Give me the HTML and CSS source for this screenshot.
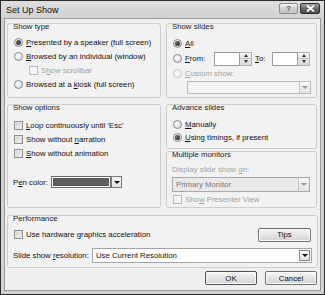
FILE: index.html
```html
<!DOCTYPE html>
<html lang="en">
<head>
  <meta charset="UTF-8" />
  <title>Set Up Show</title>
  <link rel="stylesheet" href="styles.css">
</head>
<body>
  <div class="window">
    <div class="titlebar">
      <span class="title">Set Up Show</span>
      <div class="caption">
        <span class="cap-btn help">?</span>
        <span class="cap-btn close">
          <svg width="9" height="7" viewBox="0 0 9 7"><path d="M1 0.5 L8 6.5 M8 0.5 L1 6.5" stroke="#fff" stroke-width="1.8"/></svg>
        </span>
      </div>
    </div>

    <div class="client">
      <div class="columns">
        <div class="column">
          <div class="group show-type">
            <div class="group-label">Show type</div>
            <div class="rows">
              <div class="opt"><span class="radio on"></span><span><u>P</u>resented by a speaker (full screen)</span></div>
              <div class="opt"><span class="radio"></span><span><u>B</u>rowsed by an individual (window)</span></div>
              <div class="opt indent disabled"><span class="check"></span><span>S<u>h</u>ow scrollbar</span></div>
              <div class="opt"><span class="radio"></span><span>Browsed at a <u>k</u>iosk (full screen)</span></div>
            </div>
          </div>

          <div class="group show-options">
            <div class="group-label">Show options</div>
            <div class="rows">
              <div class="opt"><span class="check"></span><span><u>L</u>oop continuously until 'Esc'</span></div>
              <div class="opt"><span class="check"></span><span>Show without <u>n</u>arration</span></div>
              <div class="opt"><span class="check"></span><span><u>S</u>how without animation</span></div>
            </div>
            <div class="pen-row">
              <span>P<u>e</u>n color:</span>
              <div class="color-pick">
                <span class="swatch"></span>
                <span class="combo-btn dark"></span>
              </div>
            </div>
          </div>
        </div>

        <div class="column">
          <div class="group show-slides">
            <div class="group-label">Show slides</div>
            <div class="opt first"><span class="radio on"></span><span><u>A</u>ll</span></div>
            <div class="opt from-row">
              <span class="radio"></span><span class="from-label"><u>F</u>rom:</span>
              <div class="spin"><span class="spin-field"></span><span class="spin-btns"><i class="up"></i><i class="down"></i></span></div>
              <span class="to-label"><u>T</u>o:</span>
              <div class="spin"><span class="spin-field"></span><span class="spin-btns"><i class="up"></i><i class="down"></i></span></div>
            </div>
            <div class="opt custom disabled"><span class="radio"></span><span><u>C</u>ustom show:</span></div>
            <div class="combo custom-combo disabled"><span class="combo-text"></span><span class="combo-btn"></span></div>
          </div>

          <div class="stack">
            <div class="group advance">
              <div class="group-label">Advance slides</div>
              <div class="opt first"><span class="radio"></span><span><u>M</u>anually</span></div>
              <div class="opt"><span class="radio on"></span><span><u>U</u>sing timings, if present</span></div>
            </div>

            <div class="group monitors">
              <div class="group-label">Multiple monitors</div>
              <div class="disabled display-label">Display slide show <u>o</u>n:</div>
              <div class="combo monitor-combo disabled"><span class="combo-text">Primary Monitor</span><span class="combo-btn"></span></div>
              <div class="opt disabled presenter"><span class="check"></span><span>Sho<u>w</u> Presenter View</span></div>
            </div>
          </div>
        </div>
      </div>

      <div class="group performance">
        <div class="group-label">Performance</div>
        <div class="perf-row">
          <div class="opt"><span class="check"></span><span>Use hardware graphics acceleration</span></div>
          <span class="btn tips">Tips</span>
        </div>
        <div class="perf-row res-row">
          <span>Slide show <u>r</u>esolution:</span>
          <div class="combo res-combo"><span class="combo-text">Use Current Resolution</span><span class="combo-btn dark"></span></div>
        </div>
      </div>

      <div class="actions">
        <span class="btn ok">OK</span>
        <span class="btn">Cancel</span>
      </div>
    </div>
  </div>
</body>
</html>
```

FILE: styles.css
```css
* {
  box-sizing: border-box;
  margin: 0;
  padding: 0;
}

body {
  background: #fff;
  font-family: "Liberation Sans", Arial, sans-serif;
  font-size: 7.8px;
  color: #111;
}

u {
  text-decoration: underline;
  text-underline-offset: 1px;
}

.window {
  width: 325px;
  height: 295px;
  border: 1px solid #2b2b2b;
  background: linear-gradient(#dedede, #cfcfcf 20px, #d2d2d2);
  padding: 0 3px 3px;
  display: flex;
  flex-direction: column;
}

/* title bar */
.titlebar {
  height: 17px;
  display: flex;
  align-items: center;
  justify-content: space-between;
  padding: 0 1px 0 2px;
}

.title {
  font-size: 9px;
  color: #111;
}

.caption {
  display: flex;
  gap: 2px;
  margin-top: -2px;
}

.cap-btn {
  height: 11px;
  border-radius: 2px;
  display: grid;
  place-items: center;
}

.help {
  width: 19px;
  border: 1px solid #8c8c8c;
  background: linear-gradient(#f4f4f4, #d0d0d0 50%, #c2c2c2);
  color: #555;
  font-size: 8px;
  font-weight: bold;
  line-height: 9px;
}

.close {
  width: 20px;
  border: 1px solid #2e2e2e;
  background: linear-gradient(#a2a2a2, #6a6a6a 50%, #4c4c4c);
}

/* client area */
.client {
  flex: 1;
  background: #efefef;
  border: 1px solid #9a9a9a;
  padding: 4px 2px 0;
  display: flex;
  flex-direction: column;
}

.columns {
  display: flex;
  gap: 5px;
}

.column {
  display: flex;
  flex-direction: column;
  gap: 6px;
}

.column:first-child {
  width: 154px;
}

.column:last-child {
  width: 151px;
}

.stack {
  display: flex;
  flex-direction: column;
  gap: 2px;
}

.group {
  border: 1px solid #cdcdcd;
  border-radius: 3px;
  background: #f2f2f2;
  padding: 0 5px;
}

.group-label {
  height: 8px;
  line-height: 8px;
  margin-top: -1px;
  color: #1a1a1a;
}

.opt {
  display: flex;
  align-items: center;
  gap: 3px;
  height: 14px;
  white-space: nowrap;
}

.disabled {
  color: #a2a2a2;
}

/* radio + checkbox */
.radio {
  width: 9px;
  height: 9px;
  flex: none;
  border-radius: 50%;
  border: 1px solid #8a8a8a;
  background: radial-gradient(circle at 40% 35%, #ffffff, #d2d2d2);
  display: grid;
  place-items: center;
  margin-left: 1px;
}

.radio.on::after {
  content: "";
  width: 5px;
  height: 5px;
  border-radius: 50%;
  background: radial-gradient(circle at 40% 35%, #6a6a6a, #1c1c1c);
}

.disabled .radio {
  border-color: #c4c4c4;
  background: #f4f4f4;
}

.check {
  width: 9px;
  height: 9px;
  flex: none;
  border: 1px solid #8e8e8e;
  background: linear-gradient(135deg, #cfcfcf, #f4f4f4);
  box-shadow: inset 0 0 0 1px #e6e6e6;
  margin-left: 1px;
}

.disabled .check {
  border-color: #bdbdbd;
  background: #f6f6f6;
  box-shadow: none;
}

/* show type */
.show-type {
  height: 75px;
}

.show-type .rows {
  margin-top: 4px;
}

.indent {
  padding-left: 15px;
}

/* show slides */
.show-slides {
  height: 75px;
}

.show-slides .first {
  margin-top: 5px;
}

.from-row {
  height: 17px;
  gap: 0;
}

.from-row .radio {
  margin-right: 3px;
}

.from-label {
  width: 29px;
}

.to-label {
  width: 20px;
  padding-left: 3px;
}

.spin {
  display: flex;
  height: 14px;
}

.spin-field {
  width: 26px;
  border: 1px solid #9c9c9c;
  background: #fff;
}

.spin-btns {
  width: 12px;
  display: flex;
  flex-direction: column;
  border: 1px solid #b4b4b4;
  border-left: none;
  background: linear-gradient(#f6f6f6, #dadada);
}

.spin-btns i {
  flex: 1;
  display: grid;
  place-items: center;
}

.spin-btns i + i {
  border-top: 1px solid #bdbdbd;
}

.spin-btns .up::after {
  content: "";
  border: 2.5px solid transparent;
  border-top: none;
  border-bottom: 3px solid #333;
}

.spin-btns .down::after {
  content: "";
  border: 2.5px solid transparent;
  border-bottom: none;
  border-top: 3px solid #333;
}

.custom {
  height: 12px;
}

.combo {
  display: flex;
  border: 1px solid #9c9c9c;
  background: #fff;
}

.combo-text {
  flex: 1;
  padding-left: 3px;
  display: flex;
  align-items: center;
}

.combo-btn {
  width: 11px;
  flex: none;
  display: grid;
  place-items: center;
  border-left: 1px solid #c6c6c6;
  background: linear-gradient(#f8f8f8, #e2e2e2);
}

.combo-btn::after {
  content: "";
  border: 3px solid transparent;
  border-bottom: none;
  border-top: 3px solid #9a9a9a;
}

.combo-btn.dark {
  border: 1px solid #7a7a7a;
  margin: 0;
}

.combo-btn.dark::after {
  border-top-color: #111;
}

.custom-combo {
  height: 13px;
  margin: 2px 0 0 15px;
  border-color: #bcbcbc;
  background: #f3f3f3;
}

/* show options */
.show-options {
  height: 104px;
}

.show-options .rows {
  margin-top: 6px;
}

.pen-row {
  display: flex;
  align-items: center;
  gap: 3px;
  height: 12px;
  margin-top: 16px;
}

.color-pick {
  display: flex;
  height: 12px;
}

.swatch {
  width: 60px;
  border: 1px solid #6c6c6c;
  box-shadow: inset 0 0 0 1px #fff;
  background: #5c5c5c;
}

/* advance slides */
.advance {
  height: 45px;
}

.advance .first {
  margin-top: 5px;
}

.advance .opt + .opt {
  height: 13px;
}

/* multiple monitors */
.monitors {
  height: 57px;
}

.display-label {
  height: 12px;
  line-height: 12px;
  margin-top: 5px;
}

.monitor-combo {
  height: 15px;
  margin: 1px 1px 0 0;
  border-color: #a8a8a8;
  background: #e9e9e9;
  color: #7a7a7a;
}

.presenter {
  height: 12px;
  margin-top: 1px;
}

/* performance */
.performance {
  height: 53px;
  margin-top: 7px;
}

.perf-row {
  display: flex;
  align-items: center;
  justify-content: space-between;
  height: 15px;
  margin-top: 4px;
}

.res-row {
  margin-top: 6px;
  gap: 3px;
  justify-content: flex-start;
}

.res-combo {
  flex: 1;
  height: 15px;
  border-color: #a4a4a4;
}

.res-combo .combo-btn.dark {
  margin: 1px;
  border-color: #8a8a8a;
}

/* buttons */
.btn {
  width: 52px;
  height: 14px;
  border: 1px solid #707070;
  border-radius: 2px;
  background: linear-gradient(#f6f6f6, #e4e4e4 50%, #d2d2d2);
  display: grid;
  place-items: center;
  box-shadow: inset 0 0 0 1px #fbfbfb;
}

.tips {
  width: 53px;
  margin-right: 1px;
}

.actions {
  display: flex;
  justify-content: flex-end;
  gap: 8px;
  margin-top: 3px;
  padding-right: 1px;
}

.ok {
  border-color: #505050;
}
```
